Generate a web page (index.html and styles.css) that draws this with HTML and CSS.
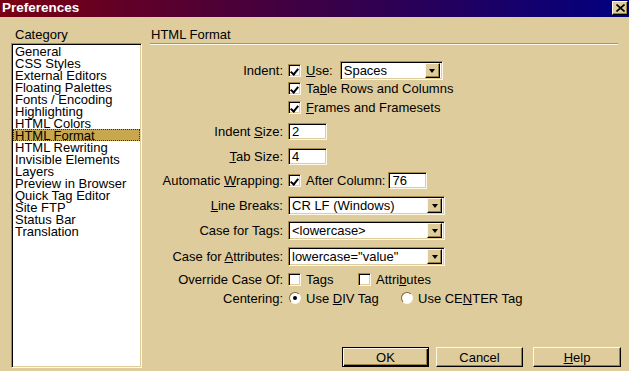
FILE: index.html
```html
<!DOCTYPE html>
<html lang="en">
  <head>
    <meta charset="UTF-8" />
    <meta name="viewport" content="width=device-width, initial-scale=1.0" />
    <title>Preferences</title>
    <link rel="stylesheet" href="styles.css">
  </head>
  <body>
    <div class="window">
      <div class="titlebar">
        <span class="title">Preferences</span>
        <button class="close">
          <svg width="9" height="8" viewBox="0 0 9 8">
            <path d="M0.5 0.5 L8.5 7.5 M8.5 0.5 L0.5 7.5" stroke="#000" stroke-width="1.6" fill="none" />
          </svg>
        </button>
      </div>

      <div class="content">
        <!-- left side: category list -->
        <div class="category">
          <div class="caption">Category</div>
          <ul class="list">
            <li>General</li>
            <li>CSS Styles</li>
            <li>External Editors</li>
            <li>Floating Palettes</li>
            <li>Fonts / Encoding</li>
            <li>Highlighting</li>
            <li>HTML Colors</li>
            <li class="selected">HTML Format</li>
            <li>HTML Rewriting</li>
            <li>Invisible Elements</li>
            <li>Layers</li>
            <li>Preview in Browser</li>
            <li>Quick Tag Editor</li>
            <li>Site FTP</li>
            <li>Status Bar</li>
            <li>Translation</li>
          </ul>
        </div>

        <!-- right side: the html format panel -->
        <div class="panel">
          <div class="heading">HTML Format</div>

          <div class="form">
            <div class="lbl">Indent:</div>
            <div class="ctl">
              <span class="check on"></span>
              <span class="txt"><u>U</u>se:</span>
              <span class="select indent-sel"><span class="val">Spaces</span><span class="arrow"></span></span>
            </div>

            <div class="lbl"></div>
            <div class="ctl">
              <span class="check on"></span>
              <span class="txt">Ta<u>b</u>le Rows and Columns</span>
            </div>

            <div class="lbl"></div>
            <div class="ctl">
              <span class="check on"></span>
              <span class="txt"><u>F</u>rames and Framesets</span>
            </div>

            <div class="lbl">Indent <u>S</u>ize:</div>
            <div class="ctl"><span class="input">2</span></div>

            <div class="lbl"><u>T</u>ab Size:</div>
            <div class="ctl"><span class="input">4</span></div>

            <div class="lbl">Automatic <u>W</u>rapping:</div>
            <div class="ctl">
              <span class="check on"></span>
              <span class="txt">After Column:</span>
              <span class="input col-input">76</span>
            </div>

            <div class="lbl"><u>L</u>ine Breaks:</div>
            <div class="ctl">
              <span class="select wide"><span class="val">CR LF (Windows)</span><span class="arrow"></span></span>
            </div>

            <div class="lbl">Case for Ta<u>g</u>s:</div>
            <div class="ctl">
              <span class="select wide"><span class="val">&lt;lowercase&gt;</span><span class="arrow"></span></span>
            </div>

            <div class="lbl">Case for <u>A</u>ttributes:</div>
            <div class="ctl">
              <span class="select wide"><span class="val">lowercase="value"</span><span class="arrow"></span></span>
            </div>

            <div class="lbl">Override Case Of:</div>
            <div class="ctl">
              <span class="opt opt-tags"><span class="check"></span><span class="txt">Tags</span></span>
              <span class="opt"><span class="check"></span><span class="txt">Attri<u>b</u>utes</span></span>
            </div>

            <div class="lbl">Centering:</div>
            <div class="ctl">
              <span class="opt opt-div"><span class="radio on"></span><span class="txt">Use <u>D</u>IV Tag</span></span>
              <span class="opt"><span class="radio"></span><span class="txt">Use CE<u>N</u>TER Tag</span></span>
            </div>
          </div>

          <div class="buttons">
            <button class="btn default">OK</button>
            <button class="btn">Cancel</button>
            <button class="btn help"><u>H</u>elp</button>
          </div>
        </div>
      </div>
    </div>
  </body>
</html>
```

FILE: styles.css
```css
* {
  box-sizing: border-box;
}
body {
  margin: 0;
  overflow: hidden;
  background: #dfcc9d;
  font-family: "Liberation Sans", Arial, sans-serif;
  font-size: 13px;
  color: #000;
}
.window {
  width: 629px;
  height: 371px;
  background: #dfcc9d;
}

/* ---------- title bar ---------- */
.titlebar {
  height: 17px;
  display: flex;
  align-items: center;
  justify-content: space-between;
  padding: 0 1px 1px 2px;
  background: linear-gradient(to right, #7a0012, #3c0046 50%, #000080);
}
.title {
  color: #fff;
  font-weight: bold;
  font-size: 13.5px;
  line-height: 16px;
}
.close {
  width: 16px;
  height: 14px;
  padding: 0;
  margin: 0;
  display: flex;
  align-items: center;
  justify-content: center;
  background: #dfcc9d;
  border: 1px solid;
  border-color: #fff8e6 #000 #000 #fff8e6;
  box-shadow: inset -1px -1px 0 #9c8040;
}

/* ---------- layout ---------- */
.content {
  display: flex;
  height: 354px;
  padding-left: 11px;
}
.category {
  width: 131px;
  padding-top: 10px;
}
.caption {
  height: 16px;
  line-height: 16px;
  padding-left: 4px;
}
.list {
  list-style: none;
  margin: 0;
  padding: 1px;
  height: 325px;
  background: #fff;
  border: 1px solid;
  border-color: #a88c48 #fff8e6 #fff8e6 #a88c48;
  box-shadow: inset 1px 1px 0 #000, inset -1px -1px 0 #dfcc9d;
}
.list li {
  height: 12px;
  line-height: 13px;
  padding-left: 2px;
  white-space: nowrap;
}
.list li.selected {
  background: #c8a84f;
  outline: 1px dotted #3a3020;
  outline-offset: -1px;
}

.panel {
  width: 471px;
  margin-left: 8px;
  padding-top: 10px;
  display: flex;
  flex-direction: column;
}
.heading {
  height: 17px;
  line-height: 16px;
  padding-left: 1px;
  margin-right: 3px;
  border-bottom: 1px solid #b8963a;
  box-shadow: 0 1px 0 #fff8e6;
}

/* ---------- form grid ---------- */
.form {
  margin-top: 17px;
  display: grid;
  grid-template-columns: 133px auto;
  grid-template-rows: 18px 19px 19px 28px 23px 25px 24px 27px 24px 22px 16px;
  column-gap: 5px;
  align-items: center;
}
.lbl {
  text-align: right;
  white-space: nowrap;
  line-height: 15px;
}
.ctl {
  display: flex;
  align-items: center;
  white-space: nowrap;
  line-height: 15px;
}
.txt {
  margin-left: 5px;
}

/* sunken control look */
.check,
.input,
.select {
  background: #fff;
  border: 1px solid;
  border-color: #a88c48 #fff8e6 #fff8e6 #a88c48;
  box-shadow: inset 1px 1px 0 #000, inset -1px -1px 0 #dfcc9d;
}
.check {
  width: 13px;
  height: 13px;
  flex: none;
  position: relative;
}
.check.on::after {
  content: "";
  position: absolute;
  left: 3px;
  top: 2px;
  width: 3px;
  height: 6px;
  border: solid #000;
  border-width: 0 2px 2px 0;
  transform: rotate(40deg);
  transform-origin: center;
}

.radio {
  width: 12px;
  height: 12px;
  flex: none;
  border-radius: 50%;
  background: #fff;
  border: 1px solid;
  border-color: #7c6630 #fff8e6 #fff8e6 #7c6630;
  position: relative;
}
.radio.on::after {
  content: "";
  position: absolute;
  left: 3px;
  top: 3px;
  width: 4px;
  height: 4px;
  border-radius: 50%;
  background: #000;
}

.input {
  width: 39px;
  height: 17px;
  padding: 0 3px;
  line-height: 15px;
}
.col-input {
  margin-left: 3px;
}

.select {
  height: 19px;
  display: flex;
  align-items: center;
  justify-content: space-between;
  padding: 1px 2px 1px 3px;
}
.indent-sel {
  width: 103px;
  margin-left: 7px;
}
.wide {
  width: 157px;
}
.val {
  line-height: 15px;
}
.arrow {
  width: 15px;
  height: 15px;
  flex: none;
  display: flex;
  align-items: center;
  justify-content: center;
  background: #dfcc9d;
  border: 1px solid;
  border-color: #fff8e6 #000 #000 #fff8e6;
  box-shadow: inset -1px -1px 0 #9c8040;
}
.arrow::after {
  content: "";
  border-left: 3px solid transparent;
  border-right: 3px solid transparent;
  border-top: 4px solid #000;
  margin-top: 1px;
}

.opt {
  display: flex;
  align-items: center;
}
.opt-tags {
  width: 70px;
}
.opt-div {
  width: 113px;
  padding-left: 1px;
}

/* ---------- buttons ---------- */
.buttons {
  margin-top: auto;
  margin-bottom: 4px;
  display: flex;
  justify-content: flex-end;
  gap: 7px;
}
.btn {
  width: 87px;
  height: 20px;
  padding: 0;
  font-family: "Liberation Sans", Arial, sans-serif;
  font-size: 13px;
  color: #000;
  background: #dfcc9d;
  border: 1px solid;
  border-color: #fff8e6 #000 #000 #fff8e6;
  box-shadow: inset -1px -1px 0 #9c8040;
}
.btn.default {
  border-color: #000;
  box-shadow: inset 1px 1px 0 #fff8e6, inset -1px -1px 0 #000, inset -2px -2px 0 #9c8040;
}
.btn.help {
  width: 88px;
  margin-left: 3px;
}
```
